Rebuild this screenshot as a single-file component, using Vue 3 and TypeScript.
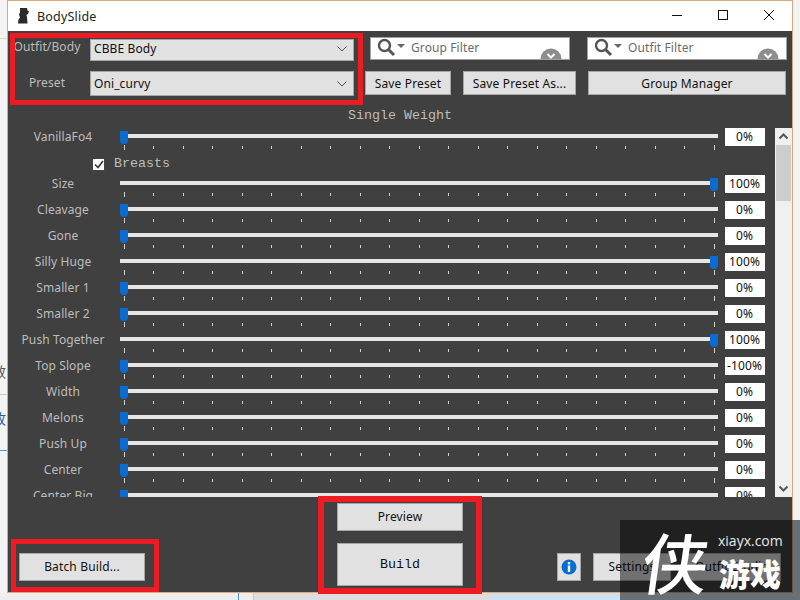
<script setup lang="ts">
interface Row { label: string; value: number; text?: string }
const first: Row = { label: 'VanillaFo4', value: 0 }
const rows: Row[] = [
  { label: 'Size', value: 100 },
  { label: 'Cleavage', value: 0 },
  { label: 'Gone', value: 0 },
  { label: 'Silly Huge', value: 100 },
  { label: 'Smaller 1', value: 0 },
  { label: 'Smaller 2', value: 0 },
  { label: 'Push Together', value: 100 },
  { label: 'Top Slope', value: 0, text: '-100%' },
  { label: 'Width', value: 0 },
  { label: 'Melons', value: 0 },
  { label: 'Push Up', value: 0 },
  { label: 'Center', value: 0 },
  { label: 'Center Big', value: 0 },
]
const ticks = Array.from({ length: 21 }, (_, i) => i)
const thumbLeft = (v: number) => `${(v / 100) * 590}px`
const filters = ['Group Filter', 'Outfit Filter']
</script>

<template>
  <div class="page">
    <span class="bg-glyph g1">效</span>
    <span class="bg-glyph g2">收</span>
    <span class="bg-rule r1"></span>
    <span class="bg-rule r2"></span>
    <span class="bg-rule r3"></span>
    <span class="bg-rule r4"></span>
    <div class="bg-strip"></div>

    <div class="window">
      <header class="titlebar">
        <svg class="app-icon" width="12" height="16" viewBox="0 0 12 16">
          <path d="M2 0h7l.5 2.500L11 3.500 10 6 8.500 7l.5 2 .5 6.500H0l.5-4L2 9.500 1 6.500l1-2z" fill="#2b2b2b" />
        </svg>
        <span class="title">BodySlide</span>
        <div class="controls">
          <svg width="12" height="12" viewBox="0 0 12 12"><path d="M1 6.500h10" stroke="#111" fill="none" /></svg>
          <svg width="12" height="12" viewBox="0 0 12 12"><rect x="1.500" y="1.500" width="9" height="9" stroke="#111" fill="none" /></svg>
          <svg width="12" height="12" viewBox="0 0 12 12"><path d="M1 1l10 10M11 1L1 11" stroke="#111" fill="none" /></svg>
        </div>
      </header>

      <main class="body">
        <div class="top-row row-a">
          <label class="top-label">Outfit/Body</label>
          <div class="combo combo-a">
            <span>CBBE Body</span>
            <svg class="chev" width="10" height="6" viewBox="0 0 10 6"><path d="M.5.500L5 5 9.500.500" stroke="#555" fill="none" /></svg>
          </div>
          <div v-for="f in filters" :key="f" class="filter">
            <svg class="lens" width="28" height="20" viewBox="0 0 28 20">
              <circle cx="7.500" cy="7.500" r="5.500" stroke="#555" stroke-width="2.400" fill="none" />
              <path d="M11.500 11.500l5.500 5.500" stroke="#555" stroke-width="3" fill="none" />
              <path d="M20 6h8l-4 4z" fill="#666" />
            </svg>
            <span class="filter-text">{{ f }}</span>
            <svg class="clear" width="22" height="11" viewBox="0 0 22 11">
              <circle cx="11" cy="11" r="10.500" fill="#8d8d8d" />
              <path d="M7.500 6l3.500 3.500L14.500 6" stroke="#fff" stroke-width="2" fill="none" />
            </svg>
          </div>
        </div>

        <div class="top-row row-b">
          <label class="top-label preset-label">Preset</label>
          <div class="combo combo-b">
            <span>Oni_curvy</span>
            <svg class="chev" width="10" height="6" viewBox="0 0 10 6"><path d="M.5.500L5 5 9.500.500" stroke="#555" fill="none" /></svg>
          </div>
          <button class="btn save">Save Preset</button>
          <button class="btn save-as">Save Preset As...</button>
          <button class="btn manager">Group Manager</button>
        </div>

        <h2 class="heading">Single Weight</h2>

        <div class="scroller">
          <div class="list">
            <div class="row">
              <span class="row-label">{{ first.label }}</span>
              <div class="slider">
                <div class="track"></div>
                <div class="thumb" :style="{ left: thumbLeft(first.value) }"></div>
                <div class="ticks"><i v-for="t in ticks" :key="t" class="tick"></i></div>
              </div>
              <span class="value">{{ first.text ?? first.value + '%' }}</span>
            </div>

            <div class="category">
              <span class="check">
                <svg width="10" height="9" viewBox="0 0 10 9"><path d="M1 4.500l3 3L9 1" stroke="#333" stroke-width="1.600" fill="none" /></svg>
              </span>
              <span class="category-name">Breasts</span>
            </div>

            <div v-for="r in rows" :key="r.label" class="row">
              <span class="row-label">{{ r.label }}</span>
              <div class="slider">
                <div class="track"></div>
                <div class="thumb" :style="{ left: thumbLeft(r.value) }"></div>
                <div class="ticks"><i v-for="t in ticks" :key="t" class="tick"></i></div>
              </div>
              <span class="value">{{ r.text ?? r.value + '%' }}</span>
            </div>
          </div>

          <div class="scrollbar">
            <svg class="sb-arrow" width="17" height="17" viewBox="0 0 17 17"><path d="M4.500 10.500l4-4 4 4" stroke="#555" stroke-width="2" fill="none" /></svg>
            <div class="sb-thumb"></div>
            <svg class="sb-arrow sb-down" width="17" height="17" viewBox="0 0 17 17"><path d="M4.500 6.500l4 4 4-4" stroke="#555" stroke-width="2" fill="none" /></svg>
          </div>
        </div>

        <footer class="bottom">
          <button class="btn batch">Batch Build...</button>
          <div class="center">
            <button class="btn preview">Preview</button>
            <button class="btn build">Build</button>
          </div>
          <div class="right">
            <button class="btn info" aria-label="info">
              <svg width="16" height="16" viewBox="0 0 16 16">
                <circle cx="8" cy="8" r="7.500" fill="#0a6cd0" />
                <rect x="6.800" y="3" width="2.400" height="2.400" fill="#fff" />
                <rect x="6.800" y="6.500" width="2.400" height="6.500" fill="#fff" />
              </svg>
            </button>
            <button class="btn settings">Settings</button>
            <button class="btn studio">Outfit Studio</button>
          </div>
        </footer>
      </main>
    </div>

    <div class="mark m1"></div>
    <div class="mark m2"></div>
    <div class="mark m3"></div>

    <div class="watermark">
      <span class="wm-big">侠</span>
      <span class="wm-url">xiayx.com</span>
      <span class="wm-cn">游戏</span>
    </div>
  </div>
</template>

<style>
html, body { margin: 0; padding: 0; }
</style>

<style scoped>
.page {
  position: relative;
  width: 800px;
  height: 600px;
  box-sizing: border-box;
  padding: 0 7px 7px;
  overflow: hidden;
  background: #f3f3f3;
  font-family: "Noto Sans", sans-serif;
  font-size: 12px;
  letter-spacing: 0.1px;
}
.bg-glyph { position: absolute; left: -8px; font-size: 14px; line-height: 16px; font-family: "Noto Sans CJK SC", sans-serif; color: #555; }
.g1 { top: 363px; }
.g2 { top: 410px; color: #2f55b5; }
.bg-rule { position: absolute; }
.r1 { left: 0; top: 38px; width: 7px; height: 1px; background: #d8d8d8; }
.r2 { left: 0; top: 394px; width: 7px; height: 1px; background: #c8c8c8; }
.r3 { left: 0; top: 450px; width: 7px; height: 1px; background: #5c8fe0; }
.r4 { left: 793px; top: 520px; width: 7px; height: 80px; background: #cfe0ee; }
.bg-strip {
  position: absolute;
  left: 0;
  right: 0;
  bottom: 0;
  height: 7px;
  background: linear-gradient(90deg, #eee 0 238px, #5c8fe0 238px 239px, #eee 239px 253px, #c8c8c8 253px 254px, #ddd 254px 492px, #cfe0ee 492px 100%);
}

.window {
  position: relative;
  height: 100%;
  box-sizing: border-box;
  border: 1px solid #dda77f;
  display: flex;
  flex-direction: column;
  background: #fff;
}
.titlebar {
  height: 30px;
  flex: none;
  display: flex;
  align-items: center;
  padding-left: 10px;
  color: #222;
}
.title { margin-left: 7px; font-size: 12.5px; letter-spacing: 0.2px; }
.controls { margin-left: auto; margin-top: -2px; display: flex; gap: 34px; padding-right: 17px; }

.body {
  flex: 1;
  min-height: 0;
  background: #404040;
  display: flex;
  flex-direction: column;
  color: #bdbdbd;
}
.top-row { display: flex; flex: none; }
.row-a { height: 24px; padding-top: 6px; align-items: flex-start; }
.row-b { height: 25px; margin-top: 10px; align-items: flex-start; }

.top-label { width: 78px; margin-right: 4px; text-align: center; line-height: 20px; }
.preset-label { line-height: 24px; }
.combo {
  width: 264px;
  box-sizing: border-box;
  border: 1px solid #a6a6a6;
  background: #e1e1e1;
  color: #111;
  display: flex;
  align-items: center;
  justify-content: space-between;
  padding: 0 3px;
}
.combo-a { height: 22px; margin-top: 2px; padding-bottom: 3px; }
.combo-b { height: 25px; }
.chev { margin-right: 3px; }

.filter {
  position: relative;
  width: 200px;
  height: 23px;
  box-sizing: border-box;
  margin-left: 16px;
  padding-bottom: 3px;
  border: 1px solid #a0a0a0;
  background: #fff;
  display: flex;
  align-items: center;
  overflow: hidden;
}
.filter + .filter { margin-left: 17px; }
.lens { margin-left: 6px; margin-top: 2px; flex: none; }
.filter-text { margin-left: 6px; color: #6b6b6b; }
.clear { position: absolute; right: 7px; bottom: 0; }

.btn {
  box-sizing: border-box;
  margin: 0;
  padding: 0;
  border: 1px solid #a6a6a6;
  background: #e1e1e1;
  color: #111;
  font: inherit;
  letter-spacing: 0.15px;
  height: 24px;
}
.save { width: 86px; margin-left: 11px; }
.save-as { width: 113px; margin-left: 12px; }
.manager { width: 198px; margin-left: 12px; }

.heading {
  margin: 11px 0 3px;
  height: 18px;
  font: 400 13.33px/18px "Liberation Mono", monospace;
  letter-spacing: 0;
  text-align: center;
  color: #bdbdbd;
}

.scroller { flex: 1; min-height: 0; display: flex; overflow: hidden; }
.list { flex: 1; min-width: 0; overflow: hidden; }
.row { display: flex; height: 26px; align-items: flex-start; }
.row-label { width: 110px; text-align: center; line-height: 18px; white-space: nowrap; }
.slider { position: relative; width: 598px; margin-left: 2px; flex: none; }
.track { height: 4px; margin: 6px 0 7px; background: #e6e6e6; }
.thumb {
  position: absolute;
  top: 3px;
  width: 8px;
  height: 13px;
  background: #0a6cd0;
  border-radius: 0 0 4px 4px;
}
.ticks { display: flex; justify-content: space-between; align-items: center; height: 5px; padding: 0 3.5px; }
.tick { width: 1px; height: 3px; background: #d0d0d0; }
.tick:first-child, .tick:last-child { height: 5px; }
.value {
  width: 40px;
  height: 18px;
  box-sizing: border-box;
  padding-right: 1px;
  margin-left: 7px;
  flex: none;
  background: #fff;
  color: #111;
  text-align: center;
  font-size: 12px;
  line-height: 18px;
}
.category { height: 21px; display: flex; align-items: center; padding-left: 84px; }
.check {
  width: 13px;
  height: 13px;
  box-sizing: border-box;
  background: #fff;
  border: 1px solid #444;
  display: flex;
  align-items: center;
  justify-content: center;
}
.category-name { margin-left: 9px; margin-top: -1px; font: 13.33px/18px "Liberation Mono", monospace; letter-spacing: 0; }

.scrollbar {
  width: 17px;
  flex: none;
  background: #f0f0f0;
  display: flex;
  flex-direction: column;
}
.sb-arrow { flex: none; }
.sb-thumb { height: 56px; margin: 0 1px; background: #cdcdcd; }
.sb-down { margin-top: auto; }

.bottom { height: 95px; flex: none; display: flex; align-items: flex-end; box-sizing: border-box; padding: 6px 0 6px 11px; }
.batch { width: 126px; height: 28px; margin-bottom: 5px; padding-bottom: 2px; }
.center { margin-left: 192px; display: flex; flex-direction: column; gap: 12px; }
.preview { width: 126px; height: 28px; padding-bottom: 1px; }
.build { width: 126px; height: 43px; font: 13.33px "Liberation Mono", monospace; letter-spacing: 0; }
.right { margin-left: 94px; margin-bottom: 5px; display: flex; gap: 12px; }
.info { width: 24px; height: 28px; display: flex; align-items: center; justify-content: center; }
.settings { width: 78px; height: 28px; padding-bottom: 2px; }
.studio { width: 98px; height: 28px; padding-bottom: 2px; }

.mark { position: absolute; border: 5px solid #ed1c24; box-sizing: border-box; }
.m1 { left: 10px; top: 33px; width: 353px; height: 72px; }
.m2 { left: 318px; top: 496px; width: 164px; height: 98px; border-width: 6px; }
.m3 { left: 11px; top: 539px; width: 148px; height: 53px; }

.watermark {
  position: absolute;
  left: 620px;
  top: 520px;
  width: 180px;
  height: 80px;
  background: rgba(0, 0, 0, 0.5);
  color: #fff;
  overflow: hidden;
}
.wm-big {
  position: absolute;
  left: 23px;
  top: 2px;
  font: 500 66px/76px "Noto Sans CJK SC", sans-serif;
  transform: skewX(-8deg);
  letter-spacing: 0;
}
.wm-url {
  position: absolute;
  left: 98px;
  top: 12px;
  font: 14px/18px "Open Sans", sans-serif;
  letter-spacing: 0;
  color: #e8e8e8;
}
.wm-cn {
  position: absolute;
  left: 99px;
  top: 33px;
  font: 900 31px/40px "Noto Sans CJK SC", sans-serif;
  letter-spacing: 0;
}
</style>
